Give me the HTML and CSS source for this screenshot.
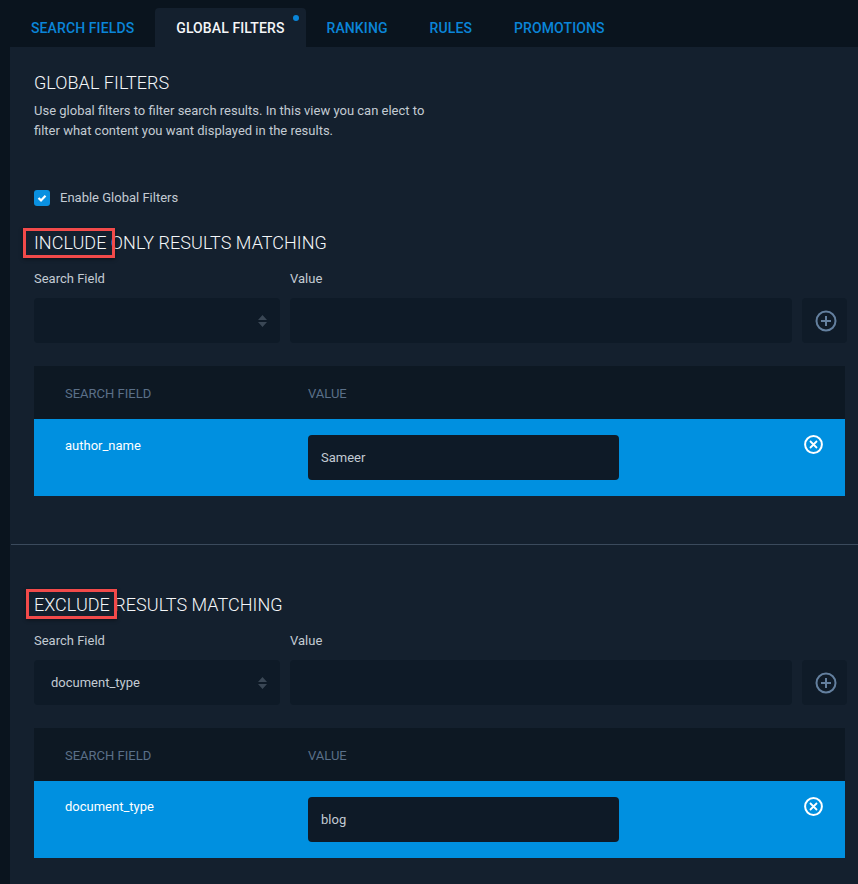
FILE: index.html
```
<!DOCTYPE html>
<html lang="en">
<head>
<meta charset="utf-8">
<title>Global Filters</title>
<link rel="stylesheet" href="styles.css">
</head>
<body>
<nav class="tabs">
  <a class="tab">Search Fields</a>
  <a class="tab tab-active">Global Filters<span class="dot"></span></a>
  <a class="tab">Ranking</a>
  <a class="tab">Rules</a>
  <a class="tab">Promotions</a>
</nav>
<main class="panel">
  <section class="intro">
    <h2 class="title">Global Filters</h2>
    <p class="desc">Use global filters to filter search results. In this view you can elect to filter what content you want displayed in the results.</p>
    <label class="check">
      <span class="box"><svg width="10" height="10" viewBox="0 0 10 10"><path d="M1.500 5 4 7.400 8.500 2.800" fill="none" stroke="#fff" stroke-width="2.200"/></svg></span>
      Enable Global Filters
    </label>
  </section>
  <section class="filter filter-include">
    <h2 class="title title-filter">Include only results matching<span class="mark mark-include"></span></h2>
    <div class="form-row">
      <div class="field field-select">
        <div class="label">Search Field</div>
        <div class="control select">
          <span></span>
          <svg class="updown" width="9" height="12" viewBox="0 0 9 12"><path d="M4.500 0 9 5H0zM0 7h9l-4.500 5z" fill="#3a4755"/></svg>
        </div>
      </div>
      <div class="field field-value">
        <div class="label">Value</div>
        <div class="control"></div>
      </div>
      <button class="add" type="button"><svg width="22" height="22" viewBox="0 0 22 22"><circle cx="11" cy="11" r="9.500" fill="none" stroke="#64809f" stroke-width="2"/><path d="M11 6v10M6 11h10" stroke="#64809f" stroke-width="2"/></svg></button>
    </div>
    <div class="table">
      <div class="thead"><span class="col-a">Search Field</span><span class="col-b">Value</span></div>
      <div class="trow">
        <span class="col-a cell">author_name</span>
        <div class="col-b"><div class="control cell-input">Sameer</div></div>
        <svg class="remove" width="19" height="19" viewBox="0 0 19 19"><circle cx="9.500" cy="9.500" r="8.400" fill="none" stroke="#fff" stroke-width="2"/><path d="M6 6l7 7M13 6l-7 7" stroke="#fff" stroke-width="1.800"/></svg>
      </div>
    </div>
  </section>
  <section class="filter filter-exclude">
    <h2 class="title title-filter">Exclude results matching<span class="mark mark-exclude"></span></h2>
    <div class="form-row">
      <div class="field field-select">
        <div class="label">Search Field</div>
        <div class="control select">
          <span>document_type</span>
          <svg class="updown" width="9" height="12" viewBox="0 0 9 12"><path d="M4.500 0 9 5H0zM0 7h9l-4.500 5z" fill="#3a4755"/></svg>
        </div>
      </div>
      <div class="field field-value">
        <div class="label">Value</div>
        <div class="control"></div>
      </div>
      <button class="add" type="button"><svg width="22" height="22" viewBox="0 0 22 22"><circle cx="11" cy="11" r="9.500" fill="none" stroke="#64809f" stroke-width="2"/><path d="M11 6v10M6 11h10" stroke="#64809f" stroke-width="2"/></svg></button>
    </div>
    <div class="table">
      <div class="thead"><span class="col-a">Search Field</span><span class="col-b">Value</span></div>
      <div class="trow">
        <span class="col-a cell">document_type</span>
        <div class="col-b"><div class="control cell-input">blog</div></div>
        <svg class="remove" width="19" height="19" viewBox="0 0 19 19"><circle cx="9.500" cy="9.500" r="8.400" fill="none" stroke="#fff" stroke-width="2"/><path d="M6 6l7 7M13 6l-7 7" stroke="#fff" stroke-width="1.800"/></svg>
      </div>
    </div>
  </section>
</main>
</body>
</html>
```
FILE: styles.css
```
* { box-sizing: border-box; }
html, body { margin: 0; height: 100%; }
body {
  width: 858px;
  height: 884px;
  overflow: hidden;
  background: #0a141e;
  font-family: Roboto, "Liberation Sans", sans-serif;
  font-size: 13px;
  color: #c3cbd3;
}
.tabs {
  display: flex;
  height: 47px;
  padding: 8px 0 0 10px;
}
.tab {
  position: relative;
  display: flex;
  align-items: center;
  height: 39px;
  padding: 0 21px;
  border-radius: 4px 4px 0 0;
  color: #0a85d8;
  font-size: 14px;
  font-weight: 500;
  letter-spacing: .11px;
  text-transform: uppercase;
}
.tab-active { background: #14202e; color: #f5f6f8; }
.dot {
  position: absolute;
  top: 7px;
  right: 7px;
  width: 6px;
  height: 6px;
  border-radius: 50%;
  background: #0a85d8;
}
.panel {
  margin-left: 10px;
  height: 837px;
  background: #14202e;
}
.intro { height: 171px; padding: 26px 24px 0; }
.title {
  position: relative;
  margin: 0;
  color: #f5f7f9;
  font-size: 18px;
  font-weight: 300;
  letter-spacing: .04px;
  line-height: 20px;
  text-transform: uppercase;
}
.desc {
  width: 400px;
  margin: 8px 0 0;
  line-height: 20px;
}
.check {
  display: flex;
  align-items: center;
  gap: 10px;
  margin-top: 49px;
  line-height: 16px;
}
.box {
  display: flex;
  align-items: center;
  justify-content: center;
  width: 16px;
  height: 16px;
  border-radius: 3px;
  background: #0a90e0;
}
.filter { padding: 15px 11px 0 24px; }
.filter-include { height: 326px; }
.filter-exclude { border-top: 1px solid #3b4a5c; margin-left: 1px; padding-left: 23px; padding-top: 50px; }
.filter-exclude .cell { margin-top: 0; }
.mark {
  position: absolute;
  border: 3px solid #f24a4a;
  box-shadow: 0 1px 4px rgba(0, 0, 0, .45);
}
.mark-include { left: -11px; top: -5px; width: 92px; height: 30px; }
.mark-exclude { left: -8px; top: -6px; width: 91px; height: 30px; }
.form-row {
  display: flex;
  align-items: flex-end;
  gap: 10px;
  margin-top: 16px;
}
.field-select { width: 246px; }
.field-value { width: 502px; }
.label { height: 20px; margin-bottom: 9px; line-height: 20px; }
.control {
  height: 45px;
  border-radius: 4px;
  background: #0e1a27;
}
.select {
  display: flex;
  align-items: center;
  justify-content: space-between;
  padding: 0 13px 0 17px;
}
.add {
  display: flex;
  align-items: center;
  justify-content: center;
  width: 45px;
  height: 45px;
  padding: 0 0 0 2px;
  border: 0;
  border-radius: 4px;
  background: #0f1b28;
}
.table { width: 811px; margin-top: 23px; }
.thead {
  display: flex;
  align-items: center;
  height: 53px;
  padding-top: 2px;
  background: #0d1823;
  color: #5b7089;
  font-size: 13px;
  text-transform: uppercase;
}
.col-a { width: 274px; padding-left: 31px; }
.col-b { width: 311px; }
.trow {
  position: relative;
  display: flex;
  align-items: flex-start;
  height: 77px;
  padding-top: 16px;
  background: #0090e0;
}
.cell { margin-top: 1px; color: #fff; line-height: 20px; }
.cell-input {
  display: flex;
  align-items: center;
  padding-left: 13px;
  background: #0e1a27;
}
.remove { position: absolute; top: 16px; right: 22px; }
```
